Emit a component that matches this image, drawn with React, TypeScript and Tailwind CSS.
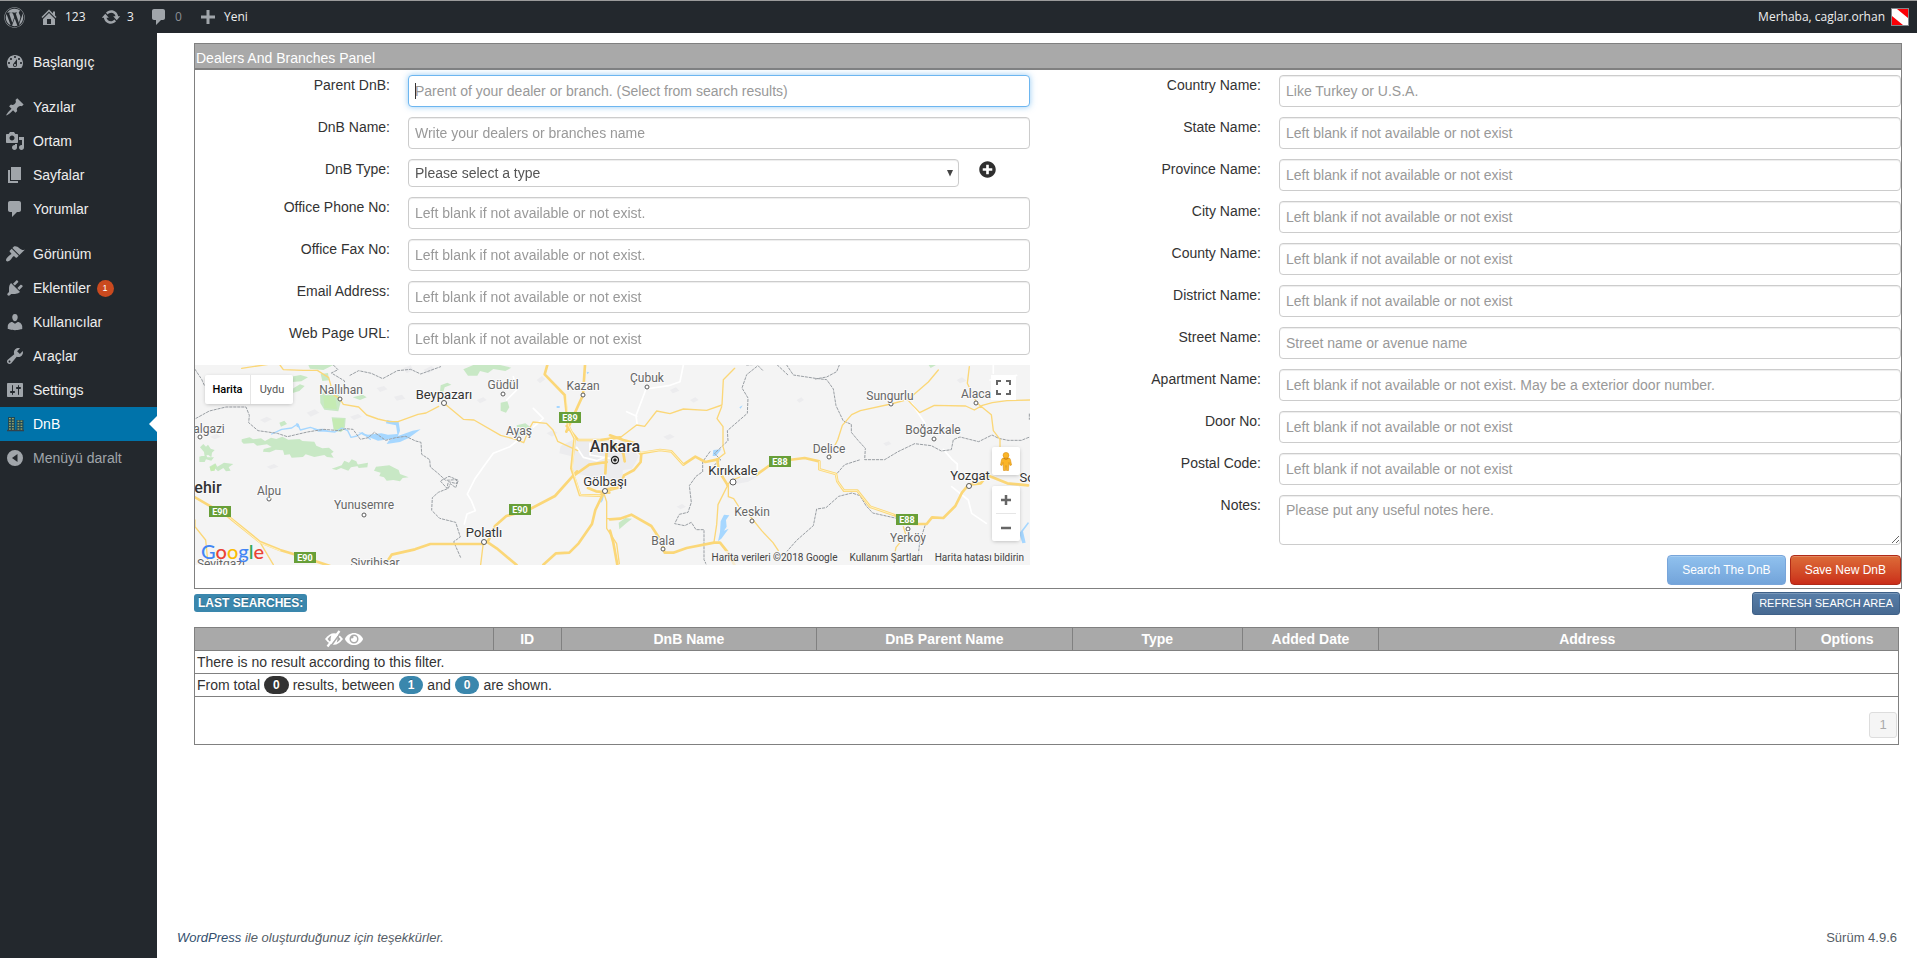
import React from "react";
import { FaEye, FaPlusCircle, FaWordpress } from "react-icons/fa";

const D = {
  home: "M16 8.5l1.53 1.53-1.06 1.06L10 4.6l-6.47 6.49-1.06-1.06L10 2.5l4 4v-2h2v4zm-6-2.46l6 5.99V18H4v-5.97zM12 17v-5H8v5h4z",
  update:
    "M10.2 3.28c3.53 0 6.43 2.61 6.92 6h2.08l-3.5 4-3.5-4h2.32c-.45-1.97-2.21-3.45-4.32-3.45-1.45 0-2.73.71-3.54 1.78L4.95 5.66C6.23 4.2 8.11 3.28 10.2 3.28zm-.4 13.44c-3.52 0-6.43-2.61-6.92-6H.8l3.5-4c1.17 1.33 2.33 2.67 3.5 4H5.48c.45 1.97 2.21 3.45 4.32 3.45 1.45 0 2.73-.71 3.54-1.78l1.71 1.95c-1.28 1.46-3.15 2.38-5.25 2.38z",
  comments: "M5 2h9c1.1 0 2 .9 2 2v7c0 1.1-.9 2-2 2h-2l-5 5v-5H5c-1.1 0-2-.9-2-2V4c0-1.1.9-2 2-2z",
  plus: "M17 8.5v3h-5.500v5.500h-3v-5.500H3v-3h5.500V3h3v5.500z",
  dashboard:
    "M3.76 16h12.48c1.1-1.37 1.76-3.11 1.76-5 0-4.42-3.58-8-8-8s-8 3.58-8 8c0 1.89.66 3.63 1.76 5zM10 4c.55 0 1 .45 1 1s-.45 1-1 1-1-.45-1-1 .45-1 1-1zM6 6c.55 0 1 .45 1 1s-.45 1-1 1-1-.45-1-1 .45-1 1-1zm8 0c.55 0 1 .45 1 1s-.45 1-1 1-1-.45-1-1 .45-1 1-1zm-5.37 5.55L12 7v6c0 1.1-.9 2-2 2s-2-.9-2-2c0-.57.24-1.08.63-1.45zM4 10c.55 0 1 .45 1 1s-.45 1-1 1-1-.45-1-1 .45-1 1-1zm12 0c.55 0 1 .45 1 1s-.45 1-1 1-1-.45-1-1 .45-1 1-1zm-5 3c0-.55-.45-1-1-1s-1 .45-1 1 .45 1 1 1 1-.45 1-1z",
  post: "M10.44 3.02l1.82-1.82 6.36 6.35-1.83 1.82c-1.05-.68-2.48-.57-3.41.36l-.75.75c-.92.93-1.04 2.35-.35 3.41l-1.83 1.82-2.41-2.41-2.8 2.79c-.42.42-3.38 2.71-3.8 2.29s1.86-3.39 2.28-3.81l2.79-2.79L4.1 9.36l1.83-1.82c1.05.69 2.48.57 3.4-.36l.75-.75c.93-.92 1.05-2.35.36-3.41z",
  media:
    "M13 11V4c0-.55-.45-1-1-1h-1.670L9 1H5L3.670 3H2c-.55 0-1 .45-1 1v7c0 .55.45 1 1 1h10c.55 0 1-.45 1-1zM7 4.500c1.380 0 2.500 1.120 2.500 2.500S8.380 9.500 7 9.500 4.500 8.380 4.500 7 5.620 4.500 7 4.500zM14 6h5v10.500c0 1.380-1.120 2.500-2.500 2.500S14 17.880 14 16.500s1.120-2.500 2.500-2.500c.17 0 .34.02.5.05V9h-3V6zm-4 8.050V13h2v3.500c0 1.380-1.120 2.500-2.500 2.500S7 17.880 7 16.500 8.120 14 9.500 14c.17 0 .34.02.5.05z",
  page: "M6 15V2h10v13H6zm-1 1h8v2H3V5h2v11z",
  appearance:
    "M14.48 11.06L7.41 3.99l1.5-1.5c.5-.56 2.3-.47 3.51.32 1.21.8 1.43 1.28 2.91 2.1 1.18.64 2.45 1.26 4.45.85zm-.71.71L6.7 4.7 4.93 6.47c-.39.39-.39 1.02 0 1.41l1.06 1.06c.39.39.39 1.03 0 1.42-.6.6-1.43 1.11-2.21 1.69-.35.26-.7.53-1.01.84C1.43 14.23.4 16.08 1.4 17.07c.99 1 2.84-.03 4.18-1.36.31-.31.58-.66.85-1.02.57-.78 1.08-1.61 1.69-2.21.39-.39 1.02-.39 1.41 0l1.06 1.06c.39.39 1.02.39 1.41 0z",
  plugins:
    "M13.11 4.36L9.87 7.6 8 5.73l3.24-3.24c.35-.34 1.05-.2 1.56.32.52.51.66 1.21.31 1.55zm-8 1.77l.91-1.12 9.01 9.01-1.19.84c-.71.71-2.63 1.16-3.82 1.16H6.14L4.9 17.26c-.59.59-1.54.59-2.12 0-.59-.58-.59-1.53 0-2.12l1.24-1.24v-3.88c0-1.13.4-3.19 1.09-3.89zm7.26 3.97l3.24-3.24c.34-.35 1.04-.21 1.55.31.52.51.66 1.21.31 1.55l-3.24 3.25z",
  users:
    "M10 9.25c-2.27 0-2.73-3.44-2.73-3.44C7 4.02 7.82 2 9.97 2c2.16 0 2.98 2.02 2.71 3.81 0 0-.41 3.44-2.68 3.44zm0 2.57L12.72 10c2.39 0 4.52 2.33 4.52 4.53v2.49s-3.65 1.13-7.24 1.13c-3.65 0-7.24-1.13-7.24-1.13v-2.49c0-2.25 1.94-4.48 4.47-4.48z",
  tools:
    "M16.68 9.77c-1.34 1.34-3.3 1.67-4.95.99l-5.41 6.52c-.99.99-2.59.99-3.58 0s-.99-2.59 0-3.57l6.52-5.42c-.68-1.65-.35-3.61.99-4.95 1.28-1.28 3.12-1.62 4.72-1.06l-2.89 2.89 2.82 2.82 2.86-2.87c.53 1.58.18 3.39-1.08 4.65zM3.81 16.21c.4.39 1.04.39 1.43 0 .4-.4.4-1.04 0-1.43-.39-.4-1.03-.4-1.43 0-.39.39-.39 1.03 0 1.43z",
  settings:
    "M18 16V4c0-.55-.45-1-1-1H3c-.55 0-1 .45-1 1v12c0 .55.45 1 1 1h14c.55 0 1-.45 1-1zM8 11h1c.55 0 1 .45 1 1s-.45 1-1 1H8v1.5c0 .28-.22.5-.5.5s-.5-.22-.5-.5V13H6c-.55 0-1-.45-1-1s.45-1 1-1h1V5.5c0-.28.22-.5.5-.5s.5.22.5.5V11zm5-2h-1c-.55 0-1-.45-1-1s.45-1 1-1h1V5.5c0-.28.22-.5.5-.5s.5.22.5.5V7h1c.55 0 1 .45 1 1s-.45 1-1 1h-1v5.5c0 .28-.22.5-.5.5s-.5-.22-.5-.5V9z",
  collapse: "M10 2a8 8 0 1 0 0 16a8 8 0 0 0 0-16zM12.500 6v8L7 10z",
};

function Icon({ d }: { d: string }) {
  return (
    <svg className="size-5 shrink-0" viewBox="0 0 20 20" fill="currentColor" fillRule="evenodd" aria-hidden="true">
      <path d={d} />
    </svg>
  );
}

function BuildingsIcon() {
  const cells: React.ReactNode[] = [];
  for (let r = 0; r < 5; r++)
    for (let c = 0; c < 2; c++) {
      cells.push(<rect key={`a${r}${c}`} x={4 + c * 3} y={4 + r * 2.6} width="1.800" height="1.300" />);
      if (r > 0) cells.push(<rect key={`b${r}${c}`} x={12.5 + c * 3} y={4 + r * 2.6} width="1.800" height="1.300" />);
    }
  return (
    <svg className="size-5 shrink-0" viewBox="0 0 20 20" aria-hidden="true">
      <path d="M3 3h7v14H3zM11.500 6h7v11h-7z" fill="#1f4a58" />
      <path d="M2 16.500h17" stroke="#33434b" strokeWidth="1.500" />
      <g fill="#9da768">{cells}</g>
    </svg>
  );
}

function TopBar() {
  const item = "flex h-8 items-center";
  return (
    <header className="flex h-[33px] items-center justify-between border-t border-[#9b9b9b] bg-[#23282d] pr-2 pl-1 font-['Open_Sans','Noto_Sans',sans-serif] text-xs text-[#eee]">
      <nav className="flex items-center" aria-label="Toolbar">
        <a href="#wp" aria-label="WordPress" className={item + " w-9 text-[#a0a5aa]"}>
          <FaWordpress className="size-[21px]" />
        </a>
        <a href="#site" className={item + " w-[61px] gap-1.5"}>
          <span className="-ml-px text-[#a0a5aa]"><Icon d={D.home} /></span>123
        </a>
        <a href="#updates" className={item + " w-12 gap-1.5"}>
          <span className="text-[#a0a5aa]"><Icon d={D.update} /></span>3
        </a>
        <a href="#comments" className={item + " w-[49px] gap-1.5 text-[#8a8f94]"}>
          <span className="text-[#a0a5aa]"><Icon d={D.comments} /></span>0
        </a>
        <a href="#new" className={item + " gap-1.5"}>
          <span className="text-[#a0a5aa]"><Icon d={D.plus} /></span>Yeni
        </a>
      </nav>
      <a href="#profile" className={item + " gap-1.5"}>
        Merhaba, caglar.orhan
        <svg className="size-[18px] border border-[#82878c] bg-white" viewBox="0 0 16 16" aria-hidden="true">
          <path d="M5 0H16V9zM0 7L11 16H0z" fill="#fb0007" />
        </svg>
      </a>
    </header>
  );
}

const menu: { label: string; icon: keyof typeof D | "dnb"; gap?: boolean; badge?: string }[] = [
  { label: "Başlangıç", icon: "dashboard" },
  { label: "Yazılar", icon: "post", gap: true },
  { label: "Ortam", icon: "media" },
  { label: "Sayfalar", icon: "page" },
  { label: "Yorumlar", icon: "comments" },
  { label: "Görünüm", icon: "appearance", gap: true },
  { label: "Eklentiler", icon: "plugins", badge: "1" },
  { label: "Kullanıcılar", icon: "users" },
  { label: "Araçlar", icon: "tools" },
  { label: "Settings", icon: "settings" },
  { label: "DnB", icon: "dnb" },
];

function Sidebar() {
  return (
    <nav className="w-[157px] shrink-0 bg-[#23282d] pt-3 text-sm text-[#eee]" aria-label="Main menu">
      <ul>
        {menu.map((m) => (
          <li key={m.label} className={m.gap ? "mt-[11px]" : ""}>
            <a
              href={`#${m.label}`}
              className={
                "relative flex h-[34px] items-center gap-2 pl-[5px] " + (m.icon === "dnb" ? "bg-[#0073aa] text-white" : "")
              }
            >
              {m.icon === "dnb" ? <BuildingsIcon /> : <span className="text-[#a0a5aa]"><Icon d={D[m.icon]} /></span>}
              {m.label}
              {m.badge && (
                <span className="-ml-0.5 flex size-[17px] items-center justify-center rounded-full bg-[#ca4a1f] text-[9px] text-white">
                  {m.badge}
                </span>
              )}
              {m.icon === "dnb" && (
                <span className="absolute top-[9px] right-0 border-y-8 border-r-8 border-y-transparent border-r-white" />
              )}
            </a>
          </li>
        ))}
        <li>
          <button type="button" className="flex h-[34px] items-center gap-2 pl-[5px] text-[#a0a5aa]">
            <Icon d={D.collapse} />
            Menüyü daralt
          </button>
        </li>
      </ul>
    </nav>
  );
}

const control =
  "w-full rounded border border-[#ccc] bg-white px-1.5 text-sm text-[#555] shadow-[inset_0_1px_1px_rgba(0,0,0,0.075)] placeholder:text-[#999] outline-none focus:border-[#6db6f0] focus:shadow-[0_0_6px_rgba(82,168,236,0.6)]";

function Field({ id, label, children }: { id: string; label: string; children: React.ReactNode }) {
  return (
    <div className="flex">
      <label htmlFor={id} className="w-[213px] shrink-0 pr-[18px] text-right leading-5">
        {label}
      </label>
      <div className="min-w-0 flex-1">{children}</div>
    </div>
  );
}

function TextField({ id, label, hint, focus }: { id: string; label: string; hint: string; focus?: boolean }) {
  return (
    <Field id={id} label={label}>
      <div className="relative">
        <input id={id} type="text" placeholder={hint} autoFocus={focus} className={control + " peer block h-8 caret-transparent"} />
        <span className="pointer-events-none absolute top-2 left-[7px] hidden h-4 w-px bg-[#333] peer-placeholder-shown:peer-focus:block" />
      </div>
    </Field>
  );
}

const BLANK = "Left blank if not available or not exist";

const places: [string, number, number, number, string?][] = [
  ["Nallıhan", 146, 29, 12],
  ["Güdül", 308, 24, 12],
  ["Kazan", 388, 25, 12],
  ["algazi", 14, 68, 12],
  ["Ayaş", 324, 70, 12],
  ["Alpu", 74, 130, 12],
  ["Yunusemre", 169, 144, 12],
  ["Sivrihisar", 180, 202, 12],
  ["Seyitgazi", 26, 203, 12],
  ["Çubuk", 452, 17, 12],
  ["Keskin", 557, 151, 12],
  ["Bala", 468, 180, 12],
  ["Delice", 634, 88, 12],
  ["Sungurlu", 695, 35, 12],
  ["Alaca", 781, 33, 12],
  ["Boğazkale", 738, 69, 12],
  ["Yerköy", 713, 177, 12],
  ["Beypazarı", 249, 34, 13, "town"],
  ["Polatlı", 289, 172, 13, "town"],
  ["Gölbaşı", 410, 121, 13, "town"],
  ["Kırıkkale", 538, 110, 13, "town"],
  ["Yozgat", 775, 115, 13, "town"],
  ["Sorgun", 845, 117, 13, "town"],
  ["Ankara", 420, 87, 16, "city"],
  ["Eskişehir", -6, 128, 16, "city"],
];

const dots: [number, number, number][] = [
  [145, 34, 2], [308, 29, 2], [388, 30, 2], [5, 72, 2], [324, 74, 2], [74, 134, 2], [169, 150, 2],
  [452, 22, 2], [557, 156, 2], [468, 184, 2], [634, 92, 2], [696, 39, 2], [781, 38, 2], [739, 74, 2],
  [713, 164, 2], [249, 38, 2.5], [289, 177, 2.5], [410, 126, 2.5], [538, 117, 3], [774, 121, 2.5],
];

const shields: [string, number, number][] = [
  ["E89", 364, 47], ["E90", 14, 141], ["E90", 314, 139], ["E90", 99, 187], ["E88", 574, 91], ["E88", 701, 149],
];

function MapDrawing() {
  return (
    <svg className="h-full w-full" viewBox="0 0 835 200" preserveAspectRatio="xMinYMin slice" role="img" aria-label="Ankara">
      <rect width="835" height="200" fill="#f4f4f4" />
      {/* western half */}
      <g transform="translate(-5 -5) scale(.33333)" strokeLinejoin="round" strokeLinecap="round" fill="none">
        <g fill="#c8e8c5">
          <path d="M302 50l30-5 22 7-20 12-38 3zM392 42l22-3 3 22-20 2zM355 15h75l-30 15-40-4zM488 112l30-8 12 8-20 8zM390 100l20-6 35 8 8 20-8 32-42-5-12-20zM425 172l42 2-2 28-12 15-22-6zM310 85l20-12 14 5-16 15-20 6zM268 188l15-6 8 10-18 8zM820 28l30-13h80l34 8-18 10-36-6-16 12-24-6-8 14-28 0zM750 96l2-20 20-8 12 6-20 8-6 20zM932 128l20-4 6 18-10 16-16-6zM980 196l26-6 14 10-6 28-30-2z" />
          <path d="M155 238l24-6 10 6 24-3 12 8 18-10 16 4 18-7 18 9 34-2 8 6 36 2 6 12 18 8 20-2 14 12-8 6 8 12-20-2-8-6-30 6-26-8-8 8-34 2-6-10-16 2-4-14-22-2-18 8-20-2 2-8 24-6-14-8-30 4-10-8-30 2-6-6zM30 262l10-10 8 8 6-6 8 12 12 4-8 8-2 14-10-8-10 6-2-14zM28 290l20-6 4 8 20 0-8 10-16-4-4 8-16 0zM58 320l18-10 6 10 20-12 28 4-14 10 6 10-14 2-8-10-16 10-8-8-14 4zM425 326l30-10 8-14 14 6 8-10 14 6 6 14-22 4-8 10-22-8-14 6zM500 314l34-6-2 14-26 2zM558 320l40-4 16 8 12 6 4 12 26 10-18 2-8 10-20-4-20 2-8-10-14-4 4-10-20-6z" />
        </g>
        <g fill="#c5ebb3"><path d="M60 322l18-10-4 20-12 2zM400 108h35l6 40-38-4zM1224 332h22v14h-22zM427 176l36 0-4 36-26-4z" /></g>
        <g fill="#a6d7ff"><path d="M504 216l30 8 40-4 20 4 28-2-4-26-30-6 2-10 36 6 4 26-6 16 44-16 24-4-36 26-26 12-40 6 6-10 12-6-44 6-30-12-14-4zM318 190l8 2 4 12-10-4zM368 208l30-2 18 6-30 3zM1236 408l8-10-6 24-6 8zM1190 35l8 2-6 6zM1100 138h9v6h-9z" /></g>
        <path d="M245 222l30-14 30-4 18-12 8 18 30-8 30 10 44 4 20-12 18 8 10 20 18-4 16-10 24 20" stroke="#a6d7ff" strokeWidth="4" />
        <g fill="#ececee">
          <path d="M1112 258l36-18 110 2 40 16v110l-58-10-92-20-6-50-34-8z" />
          <path d="M640 24l22-8 8 14-20 10zM700 30l24-12 12 8-20 14zM560 84l22-6 10 10-22 8zM612 110l24-6 10 12-26 6zM480 170l24-8 12 8-24 10zM350 158l24-10 14 10-26 12zM210 180l20-10 16 8-22 10zM60 230l20-8 12 8-18 8zM230 320l22-8 14 8-24 8zM860 120l20-8 10 8-20 10zM1040 60l16-12 10 10-16 12zM1070 220l18-10 14 8-16 12z" />
        </g>
        <g stroke="#fff" strokeWidth="5"><path d="M985 240l-25 20-50 20-28 38-28 40-22 44 12 20 12 30-25 10-8 30M1030 145l30 30-30 26M1160 262l20 30 40 10 25-10M1200 250v35l60 10M970 50l10 40-30 30" /></g>
        <g stroke="#999ea3" strokeWidth="3" strokeDasharray="7 5">
          <path d="M15 28l20 30 8 18M18 175l40-22 50-12 60 0 10 25-2 22 28 24 58 8 30 10 60-14 50-8 45 4 20-6 22 2 22 30 24-5 18-16 34 24 30-8 30-4 30 14 16 4 2 36 24 16 2 22 22 18 24 22 32-2 2 12-26-6-4 20-20-22 26-14 28 12-8 22-16-12-6 14-30 12-18 16-2 38 24 24 48 12 14 44-20 14 22 50M480 46l26-14 38 8 34 16 44-24 40-4 30 14 60-22M430 15l14 14-20 10 40 24-8 30" />
        </g>
        <g stroke="#fbd778" strokeWidth="4">
          <path d="M155 25l80-12M270 15l10 14 60 2 42 0 34 22 14 50 20 14 10 16 46 8 24 24 34 12 34 8 26 0 60-22 24-4 38-20M765 132l55 46 32 2 80 46 45 12 24 10 16-40 12-22 40 4 20 20 14 34 60 28M880 548l-8 66M212 550l38 64M15 480l0 20 32 40 6 60M1240 395l10 30 0 80 30 46 8 60M1250 476h40M1248 395l45-12" />
        </g>
        <g stroke="#fbd778" strokeWidth="8">
          <path d="M1072 15l-8 28 60 62 10 90 20 40-10 90 26 80 60 2 24-20M1185 15l-6 90-50 110M1130 198l34 42 66 0 60-8M1150 348l48-34 52-8M1258 398l-40-4-24-10M15 412l100 58 95 76 60 24 60 18 90 30M585 614l20-30 70-16 46-16 160 0 14-10 20-44 34-30 66-18 80-42 66-74M890 545l30 20 60 50M1240 400l-24 50-10 42-40 58-28 28-40 2-38 34M1250 270l-4 70" />
        </g>
        <g stroke="#fff5cf" strokeWidth="2.500"><path d="M1129 105l6 90 20 40-8 90 24 80 60 2M1164 240l66 0M120 474l90 74 60 24" /></g>
      </g>
      {/* eastern half */}
      <g transform="translate(415 -5) scale(.33333)" strokeLinejoin="round" strokeLinecap="round" fill="none">
        <g fill="#ececee">
          <path d="M0 250l50-10 36 50-20 36-66 10zM365 355l40-2 40-6-30 18-40 8z" />
          <path d="M180 90l18-8 10 10-20 8zM240 120l16-8 10 8-16 8zM160 230l20-8 14 8-20 10zM560 120l14-8 8 8-14 8zM1040 60l16-8 14 10-20 8zM1000 210l20-6 10 10-20 6zM820 250l16-6 8 8-16 6zM200 440l16-8 12 8-16 8z" />
        </g>
        <g fill="#c8e8c5"><path d="M26 488l20-14 20 2-20 16-18 16zM956 15h22l-16 9z" /></g>
        <g fill="#a6d7ff"><path d="M332 484l10-20 16 2-10 14 2 20-8 12 14-6-22 30-10 8 6-28zM1228 520l26-34 3 4-18 24 8 34-10 2zM310 270l24-2-16 20-10 0zM388 142l10-6-6 10z" /></g>
        <g stroke="#fff" strokeWidth="5"><path d="M220 15l-10 50-34 12-68 10-30 80 4 30M905 130l40 60M1000 268l26 30 16 14 0 40 30 10M1025 380l50 40 10 40 44 30M50 155l30 14M1140 60l80-14M1150 40l0-25" /></g>
        <g stroke="#999ea3" strokeWidth="3" strokeDasharray="7 5">
          <path d="M530 15l20 30 66 10 34 4 20 28 8 50 22 46 24 10 0 24 20 24 22 24-2 34 60 0 40-24 50-24 50 6 30 16 30-4 6-30 20-8 56 14 40-20 20 10 28 6 40 0 20-8 30-10M688 15l-8 20-30 16-34 6M502 15l34 32M748 300l-44 14-26 30M440 20l-30 24-14 40 18 30-2 46-60 52 2 30-40 38 18 20-18 14M300 275l-22 30 0 30-20 14-20 28 6 50-10 30-26 6-14 28 30 6 20-10 14 22 24 0 0 30 0 60 20 40M530 575l30-34 50-44 10-50 28-4 38-34 40-10 24 8 18 30 20 22 72 16M945 497l-16 50-6 56M1258 162v16M410 15l30-2 20 20" />
        </g>
        <g stroke="#fbd778" strokeWidth="4">
          <path d="M0 235l30-2 50-38 24 4 36-46 40 8 40-14 70 4 46-16 4-76 34-34M335 140l-14 36 18 24 0 60 6 20-26 20M657 290l26-50 14-44 28-32 26-12 92-20 52-14 60-52 30-36M895 122l34 36 44-22 94 2 26 12 24-14 30-8 44-6 70-2M1078 20l-6 50 28 58 44 36 6 48 20 26 0 30M355 410l16 6 18 28 26 18 40 50 34 36 16 24M355 375l0 35M352 378l-28 56-4 60-8 52M880 500l8 26-30 36-8 40M350 375l20-16 20-8" />
        </g>
        <g stroke="#fbd778" strokeWidth="8">
          <path d="M0 226l40 14 36 10 14 30 60-10 34 4 36 40 36-24 30 16 38-8M440 344l36-26 60-18 48-6 44 10 0 24 50 14 4 22 20 28 40 0 38 48 70 24 60 28 40 0 16-20 34 2 36-36 20-40 20-24 36-4 20-24 60 24 62 6M0 478l30-2 34-12 60 34 30 46 10 34 26 0 40-14 82-16 18 0 24 30 20 38M0 512l10 36 12 66M0 240l40 40 4 24" />
          <path d="M0 386l30-6 12-34 30-16 20-24 2-26M322 298l4 34 26 42" />
        </g>
        <g stroke="#fff5cf" strokeWidth="2.500"><path d="M92 278l58-8 34 4 36 40M628 304l0 24 50 14 4 22 20 28 40 0 38 48 70 24" /></g>
      </g>
      <g fill="#fff" stroke="#5c5c5c" strokeWidth="1">
        {dots.map(([x, y, r]) => <circle key={`${x}-${y}`} cx={x} cy={y} r={r} />)}
      </g>
      <circle cx="420" cy="95" r="3.500" fill="#fff" stroke="#222" strokeWidth="1.300" />
      <circle cx="420" cy="95" r="1.800" fill="#222" />
      <g fontFamily="Roboto, sans-serif" textAnchor="middle" stroke="#fafafa" strokeWidth="2" paintOrder="stroke" strokeLinejoin="round">
        {places.map(([name, x, y, size, kind]) => (
          <text key={name} x={x} y={y} fontSize={size} fill={kind ? "#333" : "#666"} fontWeight={kind === "city" ? 500 : 400}>
            {name}
          </text>
        ))}
      </g>
      {shields.map(([t, x, y]) => (
        <g key={`${x}`}>
          <rect x={x} y={y} width="22" height="11" fill="#689f38" />
          <text x={x + 11} y={y + 9} fontFamily="Roboto, sans-serif" fontSize="9" fontWeight="700" fill="#fff" textAnchor="middle">{t}</text>
        </g>
      ))}
    </svg>
  );
}

function MapPanel() {
  const box = "absolute flex items-center justify-center bg-white";
  return (
    <div className="relative h-[200px] overflow-hidden font-[Roboto,sans-serif]">
      <MapDrawing />
      <div className="absolute top-2.5 left-2.5 flex h-[29px] rounded-xs bg-white text-[11px] shadow-[0_1px_4px_-1px_rgba(0,0,0,0.3)]">
        <button type="button" className="w-[46px] border-r border-[#e6e6e6] font-medium text-black">Harita</button>
        <button type="button" className="w-[42px] text-[#565656]">Uydu</button>
      </div>
      <button type="button" aria-label="Full screen" className={box + " top-2.5 right-3.5 size-[25px]"}>
        <svg className="size-[15px]" viewBox="0 0 15 15" fill="none" stroke="#666" strokeWidth="2" aria-hidden="true">
          <path d="M1 5V1h4M10 1h4v4M14 10v4h-4M5 14H1v-4" />
        </svg>
      </button>
      <button type="button" aria-label="Street View" className={box + " top-[82px] right-2.5 size-7 rounded-xs shadow-[0_1px_4px_-1px_rgba(0,0,0,0.3)]"}>
        <svg className="h-[19px] w-3" viewBox="0 0 12 19" aria-hidden="true">
          <path d="M1.500 8q0-2 2.500-2h4q2.500 0 2.500 2l1 5-1.500.5-1-3-.500 8h-2l-.5-5-.5 5h-2l-.500-8-1 3L.5 13z" fill="#fbb526" stroke="#d88f14" strokeWidth=".6" />
          <circle cx="6" cy="3.300" r="2.900" fill="#fbb526" stroke="#d88f14" strokeWidth=".6" />
          <path d="M3.500 6.300q2.500 2 5 0" stroke="#c77d10" fill="none" />
        </svg>
      </button>
      <div className="absolute top-[121px] right-2.5 flex h-[55px] w-7 flex-col rounded-xs bg-white shadow-[0_1px_4px_-1px_rgba(0,0,0,0.3)]">
        <button type="button" aria-label="Zoom in" className="flex flex-1 items-center justify-center">
          <svg className="size-2.5" viewBox="0 0 10 10" stroke="#666" strokeWidth="2.500" aria-hidden="true"><path d="M5 0v10M0 5h10" /></svg>
        </button>
        <div className="mx-1 h-px bg-[#e6e6e6]" />
        <button type="button" aria-label="Zoom out" className="flex flex-1 items-center justify-center">
          <svg className="size-2.5" viewBox="0 0 10 10" stroke="#666" strokeWidth="2.500" aria-hidden="true"><path d="M0 5h10" /></svg>
        </button>
      </div>
      <a href="#google" aria-label="Google" className="absolute bottom-0.5 left-1.5 font-[Lato,sans-serif] text-[20px] leading-6 font-medium">
        <span className="text-[#4285f4]">G</span>
        <span className="text-[#ea4335]">o</span>
        <span className="text-[#fbbc05]">o</span>
        <span className="text-[#4285f4]">g</span>
        <span className="text-[#34a853]">l</span>
        <span className="text-[#ea4335]">e</span>
      </a>
      <div className="absolute right-0 bottom-0 flex h-3.5 items-center gap-3 bg-[#f5f5f5]/70 px-1.5 text-[10px] text-[#444]">
        <span>Harita verileri ©2018 Google</span>
        <a href="#terms">Kullanım Şartları</a>
        <a href="#report">Harita hatası bildirin</a>
      </div>
    </div>
  );
}

const rightFields: [string, string, string][] = [
  ["country", "Country Name:", "Like Turkey or U.S.A."],
  ["state", "State Name:", BLANK],
  ["province", "Province Name:", BLANK],
  ["city", "City Name:", BLANK],
  ["county", "County Name:", BLANK],
  ["district", "District Name:", BLANK],
  ["street", "Street Name:", "Street name or avenue name"],
  ["apartment", "Apartment Name:", BLANK + ". May be a exterior door number."],
  ["door", "Door No:", BLANK],
  ["postal", "Postal Code:", BLANK],
];

function DealerForm() {
  return (
    <form className="border border-[#808080]">
      <h1 className="h-[26px] border-b-2 border-[#808080] bg-[#a9a9a9] px-px pt-1 text-sm leading-5 text-white">
        Dealers And Branches Panel
      </h1>
      <div className="grid grid-cols-2 gap-9 pt-[5px] pb-[3px]">
        <div className="flex flex-col gap-2.5">
          <TextField id="parent" label="Parent DnB:" hint="Parent of your dealer or branch. (Select from search results)" focus />
          <TextField id="name" label="DnB Name:" hint="Write your dealers or branches name" />
          <Field id="type" label="DnB Type:">
            <div className="flex items-start">
              <div className="relative mr-5 flex-1">
                <select id="type" className={control + " block h-7 appearance-none"}>
                  <option>Please select a type</option>
                </select>
                <svg className="pointer-events-none absolute top-[11px] right-1.5 h-[7px] w-1.5" viewBox="0 0 6 7" fill="#444" aria-hidden="true">
                  <path d="M0 0h6L3 6.500z" />
                </svg>
              </div>
              <button type="button" aria-label="Add a type" className="mt-0.5 mr-[34px] text-[#2f2f2f]">
                <FaPlusCircle className="size-[17px]" />
              </button>
            </div>
          </Field>
          <TextField id="phone" label="Office Phone No:" hint={BLANK + "."} />
          <TextField id="fax" label="Office Fax No:" hint={BLANK + "."} />
          <TextField id="email" label="Email Address:" hint={BLANK} />
          <TextField id="web" label="Web Page URL:" hint={BLANK} />
          <MapPanel />
        </div>
        <div className="flex flex-col gap-2.5">
          {rightFields.map(([id, label, hint]) => (
            <TextField key={id} id={id} label={label} hint={hint} />
          ))}
          <Field id="notes" label="Notes:">
            <textarea id="notes" placeholder="Please put any useful notes here." className={control + " block h-[50px] py-1 leading-5"} />
          </Field>
          <div className="flex justify-end gap-1 text-xs text-white [text-shadow:0_-1px_0_rgba(0,0,0,0.25)]">
            <button
              type="button"
              className="h-[30px] rounded border border-[#78a5da] bg-linear-to-b from-[#90c1ee] to-[#73a4da] px-3.5 shadow-[inset_0_1px_0_rgba(255,255,255,0.2)]"
            >
              Search The DnB
            </button>
            <button
              type="submit"
              className="h-[30px] rounded border border-[#b02a18] bg-linear-to-b from-[#dc6b38] to-[#ca2c19] px-3.5 shadow-[inset_0_1px_0_rgba(255,255,255,0.2)]"
            >
              Save New DnB
            </button>
          </div>
        </div>
      </div>
    </form>
  );
}

function EyeOff() {
  return (
    <svg className="size-[18px]" viewBox="0 0 18 18" aria-hidden="true">
      <path d="M0 9q9-11.500 18 0q-9 11.500-18 0z" fill="currentColor" />
      <path d="M2.500 9q2-2.800 3.800-3.400q-1.600 3.600 0 6.800Q4 11.500 2.500 9zM15.500 9q-2-2.800-3.800-3.400q1.600 3.600 0 6.800Q14 11.500 15.500 9z" fill="#a9a9a9" />
      <path d="M4.800 17.500L16.300 2" stroke="#a9a9a9" strokeWidth="1.500" />
      <path d="M2.500 16.500L14.500 1" stroke="currentColor" strokeWidth="2.200" />
    </svg>
  );
}

function Pill({ dark, children }: { dark?: boolean; children: React.ReactNode }) {
  return (
    <span
      className={
        "inline-flex h-[18px] items-center rounded-full px-[9px] text-xs font-bold text-white [text-shadow:0_-1px_0_rgba(0,0,0,0.25)] " +
        (dark ? "bg-[#333]" : "bg-[#3a87ad]")
      }
    >
      {children}
    </span>
  );
}

function Results() {
  const th = "border-r border-[#808080] last:border-r-0";
  const row = "h-[23px] border-t border-[#808080]";
  return (
    <section className="mr-[3px]">
      <div className="flex items-start justify-between pt-[3px]">
        <h2 className="mt-0.5 flex h-[18px] items-center rounded-[3px] bg-[#3a87ad] px-1 text-xs font-bold text-white [text-shadow:0_-1px_0_rgba(0,0,0,0.25)]">
          LAST SEARCHES:
        </h2>
        <button
          type="button"
          className="-mr-px h-[23px] rounded-[3px] border border-[#3f6188] bg-linear-to-b from-[#587ea8] to-[#476a92] px-1.5 text-[11px] text-white shadow-[inset_0_1px_0_rgba(255,255,255,0.2)]"
        >
          REFRESH SEARCH AREA
        </button>
      </div>
      <div className="mt-3 border border-[#808080]">
        <table className="w-full table-fixed border-collapse text-left text-sm">
          <thead className="h-[22px] bg-[#a9a9a9] text-center text-white">
            <tr>
              <th scope="col" className={th}>
                <span className="flex items-center justify-center gap-0.5">
                  <EyeOff />
                  <FaEye className="size-[18px]" />
                </span>
              </th>
              <th scope="col" className={th + " w-[4%]"}>ID</th>
              <th scope="col" className={th + " w-[15%]"}>DnB Name</th>
              <th scope="col" className={th + " w-[15%]"}>DnB Parent Name</th>
              <th scope="col" className={th + " w-[10%]"}>Type</th>
              <th scope="col" className={th + " w-[8%]"}>Added Date</th>
              <th scope="col" className={th + " w-[24.5%]"}>Address</th>
              <th scope="col" className={th + " w-[6%]"}>Options</th>
            </tr>
          </thead>
          <tbody>
            <tr className={row}>
              <td colSpan={8} className="px-0.5">There is no result according to this filter.</td>
            </tr>
            <tr className={row}>
              <td colSpan={8} className="px-0.5">
                <div className="flex h-[22px] items-center gap-1">
                  From total <Pill dark>0</Pill> results, between <Pill>1</Pill> and <Pill>0</Pill> are shown.
                </div>
              </td>
            </tr>
            <tr className="h-12 border-t border-[#808080]">
              <td colSpan={8} className="pr-px align-bottom">
                <div className="flex justify-end pb-1.5">
                  <button type="button" disabled className="h-[26px] w-7 rounded-[3px] border border-[#ddd] bg-[#f5f5f5] text-[13px] text-[#aaa]">
                    1
                  </button>
                </div>
              </td>
            </tr>
          </tbody>
        </table>
      </div>
    </section>
  );
}

export default function App() {
  return (
    <div className="flex min-h-screen flex-col bg-white font-['Liberation_Sans',Arial,sans-serif] text-sm text-[#333]">
      <TopBar />
      <div className="flex flex-1">
        <Sidebar />
        <div className="flex min-w-0 flex-1 flex-col">
          <main className="pt-2.5 pr-[15px] pl-[37px]">
            <DealerForm />
            <Results />
          </main>
          <footer className="mt-auto flex justify-between pt-5 pr-5 pb-2.5 pl-5 text-[13px] leading-5 text-[#555d66]">
            <p className="italic">
              <a href="#wordpress" className="text-[#33506e]">WordPress</a> ile oluşturduğunuz için teşekkürler.
            </p>
            <p>Sürüm 4.9.6</p>
          </footer>
        </div>
      </div>
    </div>
  );
}
